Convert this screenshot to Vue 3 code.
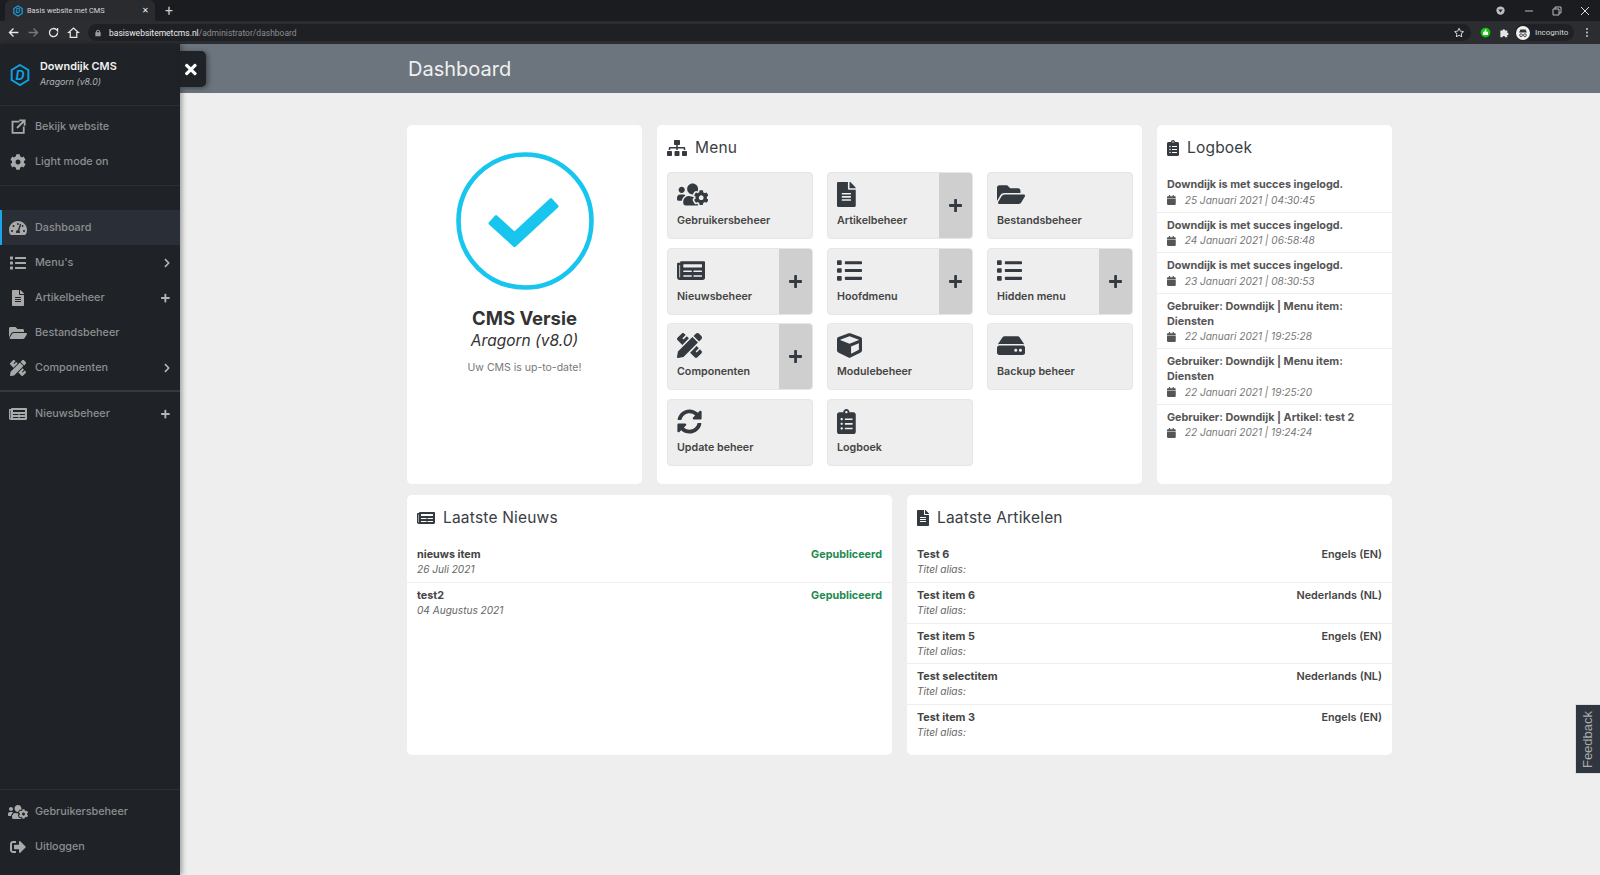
<script setup>
const icons = {
  times: ['0 0 352 512', 'M242.72 256l100.07-100.07c12.28-12.28 12.28-32.19 0-44.48l-22.24-22.24c-12.28-12.28-32.19-12.28-44.48 0L176 189.28 75.93 89.21c-12.28-12.28-32.19-12.28-44.48 0L9.21 111.45c-12.28 12.28-12.28 32.19 0 44.48L109.28 256 9.21 356.07c-12.28 12.28-12.28 32.19 0 44.48l22.24 22.24c12.28 12.28 32.2 12.28 44.48 0L176 322.72l100.07 100.07c12.28 12.28 32.2 12.28 44.48 0l22.24-22.24c12.28-12.28 12.28-32.19 0-44.48L242.72 256z'],
  plus: ['0 0 448 512', 'M416 208H272V64c0-17.67-14.33-32-32-32h-32c-17.67 0-32 14.33-32 32v144H32c-17.67 0-32 14.33-32 32v32c0 17.67 14.33 32 32 32h144v144c0 17.67 14.33 32 32 32h32c17.67 0 32-14.33 32-32V304h144c17.67 0 32-14.33 32-32v-32c0-17.67-14.33-32-32-32z'],
  chevron: ['0 0 320 512', 'M285.476 272.971L91.132 467.314c-9.373 9.373-24.569 9.373-33.941 0l-22.667-22.667c-9.357-9.357-9.375-24.522-.04-33.901L188.505 256 34.484 101.255c-9.335-9.379-9.317-24.544.04-33.901l22.667-22.667c9.373-9.373 24.569-9.373 33.941 0L285.475 239.03c9.373 9.372 9.373 24.568.001 33.941z'],
  list: ['0 0 512 512', 'M80 368H16a16 16 0 0 0-16 16v64a16 16 0 0 0 16 16h64a16 16 0 0 0 16-16v-64a16 16 0 0 0-16-16zm0-320H16A16 16 0 0 0 0 64v64a16 16 0 0 0 16 16h64a16 16 0 0 0 16-16V64a16 16 0 0 0-16-16zm0 160H16a16 16 0 0 0-16 16v64a16 16 0 0 0 16 16h64a16 16 0 0 0 16-16v-64a16 16 0 0 0-16-16zm416 176H176a16 16 0 0 0-16 16v32a16 16 0 0 0 16 16h320a16 16 0 0 0 16-16v-32a16 16 0 0 0-16-16zm0-320H176a16 16 0 0 0-16 16v32a16 16 0 0 0 16 16h320a16 16 0 0 0 16-16V80a16 16 0 0 0-16-16zm0 160H176a16 16 0 0 0-16 16v32a16 16 0 0 0 16 16h320a16 16 0 0 0 16-16v-32a16 16 0 0 0-16-16z'],
  file: ['0 0 384 512', 'M224 136V0H24C10.7 0 0 10.7 0 24v464c0 13.3 10.7 24 24 24h336c13.3 0 24-10.7 24-24V160H248c-13.2 0-24-10.8-24-24zm64 236c0 6.6-5.4 12-12 12H108c-6.6 0-12-5.4-12-12v-8c0-6.6 5.4-12 12-12h168c6.6 0 12 5.4 12 12v8zm0-64c0 6.6-5.4 12-12 12H108c-6.6 0-12-5.4-12-12v-8c0-6.6 5.4-12 12-12h168c6.6 0 12 5.4 12 12v8zm0-72v8c0 6.6-5.4 12-12 12H108c-6.6 0-12-5.4-12-12v-8c0-6.6 5.4-12 12-12h168c6.6 0 12 5.4 12 12zm96-114.1v6.1H256V0h6.1c6.4 0 12.5 2.5 17 7l97.9 98c4.5 4.5 7 10.6 7 16.9z'],
  folder: ['0 0 576 512', 'M572.694 292.093L500.27 416.248A63.997 63.997 0 0 1 444.989 448H45.025c-18.523 0-30.064-20.093-20.731-36.093l72.424-124.155A64 64 0 0 1 152 256h399.964c18.523 0 30.064 20.093 20.73 36.093zM152 224h328v-48c0-26.51-21.49-48-48-48H272l-64-64H48C21.49 64 0 85.49 0 112v278.046l69.077-118.418C86.214 242.25 117.989 224 152 224z'],
  news: ['0 0 576 512', 'M552 64H88c-13.255 0-24 10.745-24 24v8H24c-13.255 0-24 10.745-24 24v272c0 30.928 25.072 56 56 56h472c26.51 0 48-21.49 48-48V88c0-13.255-10.745-24-24-24zM56 400a8 8 0 0 1-8-8V144h16v248a8 8 0 0 1-8 8zm236-16H140c-6.627 0-12-5.373-12-12v-8c0-6.627 5.373-12 12-12h152c6.627 0 12 5.373 12 12v8c0 6.627-5.373 12-12 12zm208 0H348c-6.627 0-12-5.373-12-12v-8c0-6.627 5.373-12 12-12h152c6.627 0 12 5.373 12 12v8c0 6.627-5.373 12-12 12zm-208-96H140c-6.627 0-12-5.373-12-12v-8c0-6.627 5.373-12 12-12h152c6.627 0 12 5.373 12 12v8c0 6.627-5.373 12-12 12zm208 0H348c-6.627 0-12-5.373-12-12v-8c0-6.627 5.373-12 12-12h152c6.627 0 12 5.373 12 12v8c0 6.627-5.373 12-12 12zm0-96H140c-6.627 0-12-5.373-12-12v-40c0-6.627 5.373-12 12-12h360c6.627 0 12 5.373 12 12v40c0 6.627-5.373 12-12 12z'],
  sitemap: ['0 0 640 512', 'M128 352H32c-17.67 0-32 14.33-32 32v96c0 17.67 14.33 32 32 32h96c17.67 0 32-14.33 32-32v-96c0-17.67-14.33-32-32-32zm-24-80h192v48h48v-48h192v48h48v-57.59c0-21.17-17.23-38.41-38.41-38.41H344v-64h40c17.67 0 32-14.33 32-32V32c0-17.67-14.33-32-32-32H256c-17.67 0-32 14.33-32 32v96c0 17.67 14.33 32 32 32h40v64H94.41C73.23 224 56 241.23 56 262.41V320h48v-48zm264 80h-96c-17.67 0-32 14.33-32 32v96c0 17.67 14.33 32 32 32h96c17.67 0 32-14.33 32-32v-96c0-17.67-14.33-32-32-32zm240 0h-96c-17.67 0-32 14.33-32 32v96c0 17.67 14.33 32 32 32h96c17.67 0 32-14.33 32-32v-96c0-17.67-14.33-32-32-32z'],
  cube: ['0 0 512 512', 'M239.1 6.3l-208 78c-18.7 7-31.1 25-31.1 45v225.1c0 18.2 10.3 34.8 26.5 42.9l208 104c13.5 6.8 29.4 6.8 42.9 0l208-104c16.3-8.1 26.5-24.8 26.5-42.9V129.3c0-20-12.4-37.9-31.1-44.9l-208-78C262 2.2 250 2.2 239.1 6.3zM256 68.4l192 72v1.1l-192 78-192-78v-1.1l192-72zm32 356V275.5l160-65v133.9l-160 80z'],
  hdd: ['0 0 576 512', 'M576 304v96c0 26.51-21.49 48-48 48H48c-26.51 0-48-21.49-48-48v-96c0-26.51 21.49-48 48-48h480c26.51 0 48 21.49 48 48zm-48-80a79.557 79.557 0 0 1 30.777 6.165L462.25 85.374A48.003 48.003 0 0 0 422.311 64H153.689a48 48 0 0 0-39.938 21.374L17.223 230.165A79.557 79.557 0 0 1 48 224h480zm-48 96c-17.673 0-32 14.327-32 32s14.327 32 32 32 32-14.327 32-32-14.327-32-32-32zm-96 0c-17.673 0-32 14.327-32 32s14.327 32 32 32 32-14.327 32-32-14.327-32-32-32z'],
  sync: ['0 0 512 512', 'M370.72 133.28C339.458 104.008 298.888 87.962 255.848 88c-77.458.068-144.328 53.178-162.791 126.85-1.344 5.363-6.122 9.15-11.651 9.15H24.103c-7.498 0-13.194-6.807-11.807-14.176C33.933 94.924 134.813 8 256 8c66.448 0 126.791 26.136 171.315 68.685L463.03 40.97C478.149 25.851 504 36.559 504 57.941V192c0 13.255-10.745 24-24 24H345.941c-21.382 0-32.09-25.851-16.971-40.971l41.75-41.749zM32 296h134.059c21.382 0 32.09 25.851 16.971 40.971l-41.75 41.75c31.262 29.273 71.835 45.319 114.876 45.28 77.418-.07 144.315-53.144 162.787-126.849 1.344-5.363 6.122-9.15 11.651-9.15h57.304c7.498 0 13.194 6.807 11.807 14.176C478.067 417.076 377.187 504 256 504c-66.448 0-126.791-26.136-171.315-68.685L48.97 471.03C33.851 486.149 8 475.441 8 454.059V320c0-13.255 10.745-24 24-24z'],
  clipboard: ['0 0 384 512', 'M336 64h-80c0-35.3-28.7-64-64-64s-64 28.7-64 64H48C21.5 64 0 85.5 0 112v352c0 26.5 21.5 48 48 48h288c26.5 0 48-21.5 48-48V112c0-26.5-21.5-48-48-48zM96 424c-13.3 0-24-10.7-24-24s10.7-24 24-24 24 10.7 24 24-10.7 24-24 24zm0-96c-13.3 0-24-10.7-24-24s10.7-24 24-24 24 10.7 24 24-10.7 24-24 24zm0-96c-13.3 0-24-10.7-24-24s10.7-24 24-24 24 10.7 24 24-10.7 24-24 24zm96-192c13.3 0 24 10.7 24 24s-10.7 24-24 24-24-10.7-24-24 10.7-24 24-24zm128 368c0 4.4-3.6 8-8 8H168c-4.4 0-8-3.6-8-8v-16c0-4.4 3.6-8 8-8h144c4.4 0 8 3.6 8 8v16zm0-96c0 4.4-3.6 8-8 8H168c-4.4 0-8-3.6-8-8v-16c0-4.4 3.6-8 8-8h144c4.4 0 8 3.6 8 8v16zm0-96c0 4.4-3.6 8-8 8H168c-4.4 0-8-3.6-8-8v-16c0-4.4 3.6-8 8-8h144c4.4 0 8 3.6 8 8v16z'],
  calendar: ['0 0 448 512', 'M12 192h424c6.6 0 12 5.4 12 12v260c0 26.5-21.5 48-48 48H48c-26.5 0-48-21.5-48-48V204c0-6.6 5.4-12 12-12zm436-44v-36c0-26.5-21.5-48-48-48h-48V12c0-6.6-5.4-12-12-12h-40c-6.6 0-12 5.4-12 12v52H160V12c0-6.6-5.4-12-12-12h-40c-6.6 0-12 5.4-12 12v52H48C21.5 64 0 85.5 0 112v36c0 6.6 5.4 12 12 12h424c6.6 0 12-5.4 12-12z'],
  signout: ['0 0 512 512', 'M497 273L329 441c-15 15-41 4.5-41-17v-96H152c-13.3 0-24-10.7-24-24v-96c0-13.3 10.7-24 24-24h136V88c0-21.4 25.9-32 41-17l168 168c9.3 9.4 9.3 24.6 0 34zM192 436v-40c0-6.6-5.4-12-12-12H96c-17.7 0-32-14.3-32-32V160c0-17.7 14.3-32 32-32h84c6.6 0 12-5.4 12-12V76c0-6.6-5.4-12-12-12H96c-53 0-96 43-96 96v192c0 53 43 96 96 96h84c6.6 0 12-5.4 12-12z'],
  gauge: ['0 0 576 512', 'M288 32C128.94 32 0 160.94 0 320c0 52.8 14.25 102.26 39.06 144.8 5.61 9.62 16.3 15.2 27.44 15.2h443c11.14 0 21.83-5.58 27.44-15.2C561.75 422.26 576 372.8 576 320c0-159.06-128.94-288-288-288zm0 64c14.71 0 26.58 10.13 30.32 23.65-1.11 2.26-2.64 4.23-3.45 6.67l-9.22 27.67c-5.13 3.49-10.97 6.01-17.64 6.01-17.67 0-32-14.33-32-32S270.33 96 288 96zM96 384c-17.67 0-32-14.33-32-32s14.33-32 32-32 32 14.33 32 32-14.33 32-32 32zm48-160c-17.67 0-32-14.33-32-32s14.33-32 32-32 32 14.33 32 32-14.33 32-32 32zm246.77-72.41l-61.33 184C343.13 347.33 352 364.54 352 384c0 11.72-3.38 22.55-8.88 32H232.88c-5.5-9.45-8.88-20.28-8.88-32 0-33.94 26.5-61.43 59.9-63.59l61.34-184.01c4.17-12.56 17.73-19.45 30.36-15.17 12.57 4.19 19.35 17.79 15.17 30.36zm14.66 57.2l15.52-46.55c3.47-1.29 7.13-2.23 11.05-2.23 17.67 0 32 14.33 32 32s-14.33 32-32 32c-11.38-.01-20.89-6.28-26.57-15.22zM480 384c-17.67 0-32-14.33-32-32s14.33-32 32-32 32 14.33 32 32-14.33 32-32 32z'],
  tools: ['0 0 512 512', 'M109.46 244.04l134.58-134.56-44.12-44.12-61.68 61.68a7.919 7.919 0 0 1-11.21 0l-11.21-11.21c-3.1-3.1-3.1-8.12 0-11.21l61.68-61.68-33.64-33.65C131.47-3.1 111.39-3.1 99 9.29L9.29 99c-12.38 12.39-12.39 32.47 0 44.86l100.17 100.18zm388.47-116.8c18.76-18.76 18.75-49.17 0-67.93l-45.25-45.25c-18.76-18.76-49.18-18.76-67.95 0l-46.02 46.01 113.2 113.2 46.02-46.03zM316.08 82.71l-297 296.96L.32 487.11c-2.53 14.49 10.09 27.11 24.59 24.56l107.45-18.84L429.28 195.9 316.08 82.71zm186.63 285.43l-33.64-33.64-61.68 61.68c-3.1 3.1-8.12 3.1-11.21 0l-11.21-11.21c-3.09-3.1-3.09-8.12 0-11.21l61.68-61.68-44.14-44.14L267.93 402.5l100.21 100.2c12.39 12.39 32.47 12.39 44.86 0l89.71-89.7c12.39-12.39 12.39-32.47 0-44.86z'],
  cog: ['0 0 512 512', 'M487.4 315.7l-42.6-24.6c4.3-23.2 4.3-47 0-70.2l42.6-24.6c4.9-2.8 7.1-8.6 5.5-14-11.1-35.6-30-67.8-54.7-94.6-3.8-4.1-10-5.1-14.8-2.3L380.8 110c-17.9-15.4-38.5-27.3-60.8-35.1V25.8c0-5.6-3.9-10.5-9.4-11.7-36.7-8.2-74.3-7.8-109.2 0-5.5 1.2-9.4 6.1-9.4 11.7V75c-22.2 7.9-42.8 19.8-60.8 35.1L88.7 85.5c-4.9-2.8-11-1.9-14.8 2.3-24.7 26.7-43.6 58.9-54.7 94.6-1.7 5.4.6 11.2 5.5 14L67.3 221c-4.3 23.2-4.3 47 0 70.2l-42.6 24.6c-4.9 2.8-7.1 8.6-5.5 14 11.1 35.6 30 67.8 54.7 94.6 3.8 4.1 10 5.1 14.8 2.3l42.6-24.6c17.9 15.4 38.5 27.3 60.8 35.1v49.2c0 5.6 3.9 10.5 9.4 11.7 36.7 8.2 74.3 7.8 109.2 0 5.5-1.2 9.4-6.1 9.4-11.7v-49.2c22.2-7.9 42.8-19.8 60.8-35.1l42.6 24.6c4.9 2.8 11 1.9 14.8-2.3 24.7-26.7 43.6-58.9 54.7-94.6 1.5-5.5-.7-11.3-5.6-14.1zM256 336c-44.1 0-80-35.9-80-80s35.9-80 80-80 80 35.9 80 80-35.9 80-80 80z'],
  userscog: ['0 0 640 512', 'M610.5 341.3c2.6-14.1 2.6-28.5 0-42.6l25.8-14.9c3-1.7 4.3-5.2 3.3-8.5-6.7-21.6-18.2-41.2-33.2-57.4-2.3-2.5-6-3.1-9-1.4l-25.8 14.9c-10.9-9.3-23.4-16.5-36.9-21.3v-29.8c0-3.4-2.4-6.4-5.7-7.1-22.3-5-45-4.8-66.2 0-3.3.7-5.7 3.7-5.7 7.1v29.8c-13.5 4.8-26 12-36.9 21.3l-25.8-14.9c-2.9-1.7-6.7-1.1-9 1.4-15 16.2-26.5 35.8-33.2 57.4-1 3.3.4 6.8 3.3 8.5l25.8 14.9c-2.6 14.1-2.6 28.5 0 42.6l-25.8 14.9c-3 1.7-4.3 5.2-3.3 8.5 6.7 21.6 18.2 41.1 33.2 57.4 2.3 2.5 6 3.1 9 1.4l25.8-14.9c10.9 9.3 23.4 16.5 36.9 21.3v29.8c0 3.4 2.4 6.4 5.7 7.1 22.3 5 45 4.8 66.2 0 3.3-.7 5.7-3.7 5.7-7.1v-29.8c13.5-4.8 26-12 36.9-21.3l25.8 14.9c2.9 1.7 6.7 1.1 9-1.4 15-16.2 26.5-35.8 33.2-57.4 1-3.3-.4-6.8-3.3-8.5l-25.8-14.9zM496 368.5c-26.8 0-48.5-21.8-48.5-48.5s21.8-48.5 48.5-48.5 48.5 21.8 48.5 48.5-21.7 48.5-48.5 48.5zM96 224c35.3 0 64-28.7 64-64s-28.7-64-64-64-64 28.7-64 64 28.7 64 64 64zm224 32c1.9 0 3.7-.5 5.6-.6 8.3-21.7 20.5-42.1 36.3-59.2 7.4-8 17.9-12.6 28.9-12.6 6.9 0 13.7 1.8 19.6 5.3l7.9 4.6c.8-.5 1.6-.9 2.4-1.4 7-14.6 11.2-30.8 11.2-48 0-61.9-50.1-112-112-112S208 82.1 208 144c0 61.9 50.1 112 112 112zm105.2 194.5c-2.3-1.2-4.6-2.6-6.8-3.9-8.2 4.8-15.3 9.8-27.5 9.8-10.9 0-21.4-4.6-28.9-12.6-18.3-19.8-32.3-43.9-40.2-69.6-10.7-34.5 24.9-49.7 25.8-50.3-.1-2.6-.1-5.2 0-7.8l-7.9-4.6c-3.8-2.2-7-5-9.8-8.1-3.3.2-6.5.6-9.8.6-24.6 0-47.6-6-68.5-16h-8.3C179.6 288 128 339.6 128 403.2V432c0 26.5 21.5 48 48 48h255.4c-3.7-6-6.2-12.8-6.2-20.3v-9.2zM173.1 274.6C161.5 263.1 145.6 256 128 256H64c-35.3 0-64 28.7-64 64v32c0 17.7 14.3 32 32 32h65.9c6.3-47.4 34.9-87.3 75.2-109.4z'],
  star: ['0 0 576 512', 'M528.1 171.5L382 150.2 316.7 17.8c-11.7-23.6-45.6-23.9-57.4 0L194 150.2 47.9 171.5c-26.2 3.8-36.7 36.1-17.7 54.6l105.7 103-25 145.5c-4.5 26.3 23.2 46 46.4 33.7L288 439.6l130.7 68.7c23.2 12.2 50.9-7.4 46.4-33.7l-25-145.5 105.7-103c19-18.5 8.5-50.8-17.7-54.6zM388.6 312.3l23.7 138.4L288 385.4l-124.3 65.3 23.7-138.4-100.6-98 139-20.2 62.2-126 62.2 126 139 20.2-100.6 98z'],
}

const topLinks = [
  { icon: 'cog', label: 'Light mode on' },
]
const navItems = [
  { icon: 'gauge', label: 'Dashboard', active: true },
  { icon: 'list', label: "Menu's", after: 'chevron' },
  { icon: 'file', label: 'Artikelbeheer', after: 'plus' },
  { icon: 'folder', label: 'Bestandsbeheer' },
  { icon: 'tools', label: 'Componenten', after: 'chevron' },
]
const tiles = [
  { icon: 'userscog', label: 'Gebruikersbeheer' },
  { icon: 'file', label: 'Artikelbeheer', add: true },
  { icon: 'folder', label: 'Bestandsbeheer' },
  { icon: 'news', label: 'Nieuwsbeheer', add: true },
  { icon: 'list', label: 'Hoofdmenu', add: true },
  { icon: 'list', label: 'Hidden menu', add: true },
  { icon: 'tools', label: 'Componenten', add: true },
  { icon: 'cube', label: 'Modulebeheer' },
  { icon: 'hdd', label: 'Backup beheer' },
  { icon: 'sync', label: 'Update beheer' },
  { icon: 'clipboard', label: 'Logboek' },
]
const logs = [
  { text: 'Downdijk is met succes ingelogd.', date: '25 Januari 2021 | 04:30:45' },
  { text: 'Downdijk is met succes ingelogd.', date: '24 Januari 2021 | 06:58:48' },
  { text: 'Downdijk is met succes ingelogd.', date: '23 Januari 2021 | 08:30:53' },
  { text: 'Gebruiker: Downdijk | Menu item: Diensten', date: '22 Januari 2021 | 19:25:28' },
  { text: 'Gebruiker: Downdijk | Menu item: Diensten', date: '22 Januari 2021 | 19:25:20' },
  { text: 'Gebruiker: Downdijk | Artikel: test 2', date: '22 Januari 2021 | 19:24:24' },
]
const news = [
  { title: 'nieuws item', sub: '26 Juli 2021', side: 'Gepubliceerd' },
  { title: 'test2', sub: '04 Augustus 2021', side: 'Gepubliceerd' },
]
const articles = [
  { title: 'Test 6', sub: 'Titel alias:', side: 'Engels (EN)' },
  { title: 'Test item 6', sub: 'Titel alias:', side: 'Nederlands (NL)' },
  { title: 'Test item 5', sub: 'Titel alias:', side: 'Engels (EN)' },
  { title: 'Test selectitem', sub: 'Titel alias:', side: 'Nederlands (NL)' },
  { title: 'Test item 3', sub: 'Titel alias:', side: 'Engels (EN)' },
]
</script>

<template>
  <div class="window">
    <div class="tabstrip">
      <div class="tab">
        <svg class="favicon" viewBox="0 0 24 28">
          <path d="M12 2l10 6v12l-10 6-10-6V8z" fill="none" stroke="#1a9fd8" stroke-width="3" />
          <text x="12" y="20" text-anchor="middle" class="favicon-d">D</text>
        </svg>
        <span class="tab-title">Basis website met CMS</span>
        <span class="tab-close">✕</span>
      </div>
      <span class="tab-new">+</span>
      <div class="win-controls">
        <svg class="win-badge" viewBox="0 0 16 16"><circle cx="8" cy="8" r="6" fill="#bdbdbd" /><path d="M5 6.5h6L8 11z" fill="#222" /></svg>
        <svg class="win-btn" viewBox="0 0 12 12"><path d="M2 6h8" stroke="#bbb" /></svg>
        <svg class="win-btn" viewBox="0 0 12 12"><path d="M2 4h6v6H2zM4 4V2h6v6H8" fill="none" stroke="#bbb" /></svg>
        <svg class="win-btn" viewBox="0 0 12 12"><path d="M2 2l8 8M10 2l-8 8" stroke="#ddd" /></svg>
      </div>
    </div>
    <div class="toolbar">
      <svg class="nav-ico" viewBox="0 0 16 16"><path d="M14 8H3M8 3L3 8l5 5" fill="none" stroke="#e8e8e8" stroke-width="1.6" /></svg>
      <svg class="nav-ico" viewBox="0 0 16 16"><path d="M2 8h11M8 3l5 5-5 5" fill="none" stroke="#77797c" stroke-width="1.6" /></svg>
      <svg class="nav-ico" viewBox="0 0 16 16"><path d="M13 8a5 5 0 1 1-1.5-3.5L13 6V2.5" fill="none" stroke="#e8e8e8" stroke-width="1.6" /></svg>
      <svg class="nav-ico" viewBox="0 0 16 16"><path d="M2 8l6-5.5L14 8h-2v6H4V8z" fill="none" stroke="#e8e8e8" stroke-width="1.5" /></svg>
      <div class="omnibox">
        <svg class="lock" viewBox="0 0 12 12"><path d="M3 5V4a3 3 0 0 1 6 0v1h1v6H2V5zm1.5 0h3V4a1.5 1.5 0 0 0-3 0z" fill="#9a9b9d" /></svg>
        <span class="url"><b>basiswebsitemetcms.nl</b>/administrator/dashboard</span>
        <svg class="fa omni-star" :viewBox="icons.star[0]"><path :d="icons.star[1]" /></svg>
      </div>
      <svg class="ext-green" viewBox="0 0 16 16"><circle cx="8" cy="8" r="6" fill="#11c20f" /><path d="M5 7h1.5l1.5-3h1v3h2v4H5z" fill="#fff" /></svg>
      <svg class="ext-puzzle" viewBox="0 0 16 16"><path d="M2 5h3.2a1.8 1.8 0 1 1 3.6 0H12v3.2a1.8 1.8 0 1 1 0 3.6V15H8.8a1.8 1.8 0 1 0-3.6 0H2z" fill="#e4e4e4" /></svg>
      <div class="incognito">
        <svg class="avatar" viewBox="0 0 16 16"><circle cx="8" cy="8" r="8" fill="#efefef" /><path d="M3.5 7.5h9L11 4H5z" fill="#333" /><circle cx="5.8" cy="10.5" r="1.6" fill="none" stroke="#333" /><circle cx="10.2" cy="10.5" r="1.6" fill="none" stroke="#333" /></svg>
        <span>Incognito</span>
      </div>
      <svg class="kebab" viewBox="0 0 4 16"><circle cx="2" cy="3" r="1.4" /><circle cx="2" cy="8" r="1.4" /><circle cx="2" cy="13" r="1.4" /></svg>
    </div>

    <div class="page">
      <aside class="sidebar">
        <div class="brand">
          <svg class="logo" viewBox="0 0 24 28">
            <path d="M12 2l10 6v12l-10 6-10-6V8z" fill="none" stroke="#0f9fe0" stroke-width="2.4" />
            <text x="12" y="19.5" text-anchor="middle" class="logo-d">D</text>
          </svg>
          <div class="brand-text">
            <div class="brand-name">Downdijk CMS</div>
            <div class="brand-sub">Aragorn (v8.0)</div>
          </div>
        </div>
        <button class="close-btn" type="button">
          <svg class="fa" :viewBox="icons.times[0]"><path :d="icons.times[1]" /></svg>
        </button>

        <div class="nav-group first">
          <a class="nav-item">
            <span class="nav-icon">
              <svg viewBox="0 0 20 20"><path d="M11 3.5H2v15h15V10M8 12L18 2M11 1.8h7.2V9" fill="none" stroke="currentColor" stroke-width="2.4" /></svg>
            </span>
            <span>Bekijk website</span>
          </a>
          <a v-for="l in topLinks" :key="l.label" class="nav-item">
            <span class="nav-icon"><svg class="fa" :viewBox="icons[l.icon][0]"><path :d="icons[l.icon][1]" /></svg></span>
            <span>{{ l.label }}</span>
          </a>
        </div>

        <div class="nav-group main-nav">
          <a v-for="n in navItems" :key="n.label" class="nav-item" :class="{ active: n.active }">
            <span class="nav-icon"><svg class="fa" :viewBox="icons[n.icon][0]"><path :d="icons[n.icon][1]" /></svg></span>
            <span>{{ n.label }}</span>
            <svg v-if="n.after" class="fa after" :viewBox="icons[n.after][0]"><path :d="icons[n.after][1]" /></svg>
          </a>
        </div>

        <div class="nav-group news-nav">
          <a class="nav-item">
            <span class="nav-icon"><svg class="fa" :viewBox="icons.news[0]"><path :d="icons.news[1]" /></svg></span>
            <span>Nieuwsbeheer</span>
            <svg class="fa after" :viewBox="icons.plus[0]"><path :d="icons.plus[1]" /></svg>
          </a>
        </div>

        <div class="nav-group bottom-nav">
          <a class="nav-item">
            <span class="nav-icon"><svg class="fa" :viewBox="icons.userscog[0]"><path :d="icons.userscog[1]" /></svg></span>
            <span>Gebruikersbeheer</span>
          </a>
          <a class="nav-item">
            <span class="nav-icon"><svg class="fa" :viewBox="icons.signout[0]"><path :d="icons.signout[1]" /></svg></span>
            <span>Uitloggen</span>
          </a>
        </div>
      </aside>

      <main class="main">
        <header class="topbar"><h1>Dashboard</h1></header>
        <div class="content">
          <section class="card version">
            <svg class="status" viewBox="0 0 140 140">
              <circle cx="70" cy="70" r="66.5" fill="none" stroke="#17c5ee" stroke-width="4.6" />
              <path d="M41 65.7L59.5 82.3 96 48.7 102 55.3 59.5 94.7 35 72.3z" fill="#17c5ee" stroke="#17c5ee" stroke-width="3" stroke-linejoin="round" />
            </svg>
            <h2>CMS Versie</h2>
            <div class="version-name">Aragorn (v8.0)</div>
            <p>Uw CMS is up-to-date!</p>
          </section>

          <section class="card">
            <h3 class="card-title">
              <svg class="fa" :viewBox="icons.sitemap[0]"><path :d="icons.sitemap[1]" /></svg>Menu
            </h3>
            <div class="tiles">
              <div v-for="t in tiles" :key="t.label" class="tile">
                <div class="tile-main">
                  <svg class="fa" :viewBox="icons[t.icon][0]"><path :d="icons[t.icon][1]" /></svg>
                  <span>{{ t.label }}</span>
                </div>
                <div v-if="t.add" class="tile-add">
                  <svg class="fa" :viewBox="icons.plus[0]"><path :d="icons.plus[1]" /></svg>
                </div>
              </div>
            </div>
          </section>

          <section class="card">
            <h3 class="card-title">
              <svg class="fa" :viewBox="icons.clipboard[0]"><path :d="icons.clipboard[1]" /></svg>Logboek
            </h3>
            <ul class="log">
              <li v-for="(l, i) in logs" :key="i">
                <strong>{{ l.text }}</strong>
                <em>
                  <svg class="fa" :viewBox="icons.calendar[0]"><path :d="icons.calendar[1]" /></svg>{{ l.date }}
                </em>
              </li>
            </ul>
          </section>

          <div class="bottom-row">
            <section class="card">
              <h3 class="card-title">
                <svg class="fa" :viewBox="icons.news[0]"><path :d="icons.news[1]" /></svg>Laatste Nieuws
              </h3>
              <ul class="rows">
                <li v-for="r in news" :key="r.title">
                  <div><strong>{{ r.title }}</strong><em>{{ r.sub }}</em></div>
                  <span class="published">{{ r.side }}</span>
                </li>
              </ul>
            </section>
            <section class="card">
              <h3 class="card-title">
                <svg class="fa" :viewBox="icons.file[0]"><path :d="icons.file[1]" /></svg>Laatste Artikelen
              </h3>
              <ul class="rows">
                <li v-for="r in articles" :key="r.title">
                  <div><strong>{{ r.title }}</strong><em>{{ r.sub }}</em></div>
                  <span class="lang">{{ r.side }}</span>
                </li>
              </ul>
            </section>
          </div>
        </div>
      </main>
    </div>
    <div class="feedback"><span>Feedback</span></div>
  </div>
</template>

<style scoped>
.window {
  position: relative;
  display: flex;
  flex-direction: column;
  height: 875px;
  overflow: hidden;
  font-family: Inter, "Liberation Sans", sans-serif;
  background: #eee;
}

.fa {
  fill: currentColor;
  display: block;
  height: 1em;
  flex: none;
}

.tabstrip {
  display: flex;
  align-items: flex-end;
  height: 21px;
  padding-left: 5px;
  background: #1b1c1f;
}

.tab {
  display: flex;
  align-items: center;
  width: 150px;
  height: 21px;
  padding: 0 6px 0 8px;
  box-sizing: border-box;
  background: #2a2b2f;
  border-radius: 6px 6px 0 0;
  color: #d8d8d8;
  font-family: Roboto, sans-serif;
  font-size: 7.4px;
}

.favicon {
  width: 10px;
  height: 12px;
  margin-right: 4px;
}

.favicon-d {
  fill: #1a9fd8;
  font: italic 700 15px Inter, sans-serif;
}

.tab-close {
  margin-left: auto;
  font-size: 8px;
  color: #eee;
}

.tab-new {
  align-self: center;
  margin-left: 10px;
  color: #ccc;
  font: 14px Roboto, sans-serif;
}

.win-controls {
  display: flex;
  align-items: center;
  align-self: center;
  margin-left: auto;
  padding-right: 9px;
}

.win-badge {
  width: 11px;
  height: 11px;
  margin-right: 1px;
}

.win-btn {
  width: 12px;
  height: 12px;
  margin-left: 16px;
}

.toolbar {
  display: flex;
  align-items: center;
  height: 23px;
  padding-left: 7px;
  background: #2c2d30;
}

.nav-ico {
  width: 13px;
  height: 13px;
  margin-right: 7px;
}

.omnibox {
  display: flex;
  align-items: center;
  width: 1383px;
  height: 17px;
  margin-left: 1px;
  padding: 0 7px 0 6px;
  box-sizing: border-box;
  background: #1f2023;
  border-radius: 9px;
}

.lock {
  width: 8px;
  height: 8px;
  margin-right: 7px;
}

.url {
  color: #8b8c8e;
  font-family: Roboto, sans-serif;
  font-size: 8.5px;
}

.url b {
  color: #eceff1;
  font-weight: 400;
}

.omni-star {
  margin-left: auto;
  font-size: 9px;
  color: #ddd;
}

.ext-green {
  width: 13px;
  height: 13px;
  margin-left: 8px;
}

.ext-puzzle {
  width: 11px;
  height: 11px;
  margin-left: 7px;
}

.incognito {
  display: flex;
  align-items: center;
  gap: 5px;
  height: 17px;
  margin-left: 5px;
  padding: 0 6px 0 1px;
  background: #202124;
  border-radius: 9px;
  color: #d5d5d5;
  font-family: Roboto, sans-serif;
  font-size: 8px;
}

.avatar {
  width: 14px;
  height: 14px;
}

.kebab {
  width: 4px;
  height: 11px;
  margin-left: 11px;
  fill: #ccc;
}

.page {
  display: flex;
  flex: 1;
  min-height: 0;
}

.sidebar {
  position: relative;
  display: flex;
  flex-direction: column;
  flex: none;
  width: 180px;
  background: #1f2327;
  box-shadow: 2px 0 5px rgba(0, 0, 0, 0.35);
  z-index: 2;
}

.brand {
  display: flex;
  align-items: center;
  gap: 10px;
  height: 61px;
  padding-left: 10px;
  border-bottom: 1px solid #2b2f33;
}

.logo {
  width: 20px;
  height: 24px;
  flex: none;
}

.logo-d {
  fill: #0f9fe0;
  font: italic 700 15px Inter, sans-serif;
}

.brand-text {
  margin-bottom: 4px;
}

.brand-name {
  color: #f1f1f1;
  font-size: 10.9px;
  font-weight: 600;
}

.brand-sub {
  margin-top: 3px;
  color: #b5b5b5;
  font-size: 8.8px;
  font-style: italic;
}

.close-btn {
  position: absolute;
  top: 7px;
  right: -26px;
  display: grid;
  place-items: center;
  width: 26px;
  height: 36px;
  padding: 0 4px 0 0;
  border: 0;
  border-radius: 0 5px 5px 0;
  background: #1f2327;
  color: #fff;
  font-size: 17px;
  box-shadow: 2px 1px 5px rgba(0, 0, 0, 0.4);
}

.nav-group {
  display: flex;
  flex-direction: column;
}

.nav-group.first {
  padding: 3px 0 6px;
  border-bottom: 1px solid #2b2f33;
}

.main-nav {
  margin-top: 24px;
  padding-bottom: 5px;
  border-bottom: 2px solid #363a3e;
}

.news-nav {
  margin-top: 4px;
}

.bottom-nav {
  margin-top: auto;
  padding: 4px 0 11px;
  border-top: 1px solid #2b2f33;
}

.nav-item {
  display: flex;
  align-items: center;
  height: 35px;
  padding: 0 10px 0 9px;
  color: #8d8f91;
  font-size: 10.8px;
  font-weight: 500;
}

.nav-item.active {
  height: 35px;
  padding-left: 7px;
  border-left: 2px solid #18a5ea;
  background: #2a2e36;
}

.nav-icon {
  display: flex;
  justify-content: center;
  width: 18px;
  margin-right: 8px;
  color: #a9a9a9;
}

.nav-icon svg {
  width: auto;
  height: 16px;
  flex: none;
}

.nav-icon svg:not(.fa) {
  width: 15px;
  height: 15px;
}

.after {
  margin-left: auto;
  color: #b5b5b5;
  font-size: 10px;
}

.main {
  flex: 1;
  min-width: 0;
}

.topbar {
  display: flex;
  align-items: center;
  height: 49px;
  padding-left: 228px;
  background: #6c757d;
}

.topbar h1 {
  margin: 0;
  color: #f0f0f0;
  font-size: 20px;
  font-weight: 400;
}

.content {
  display: grid;
  grid-template-columns: 235px 485px 235px;
  grid-template-rows: 359px 260px;
  column-gap: 15px;
  row-gap: 11px;
  width: 985px;
  margin: 32px 0 0 227px;
}

.card {
  background: #fff;
  border-radius: 5px;
  color: #333;
}

.version {
  display: flex;
  flex-direction: column;
  align-items: center;
  padding-top: 26px;
  box-sizing: border-box;
}

.status {
  width: 140px;
  height: 140px;
}

.version h2 {
  margin: 15px 0 0;
  font-size: 18.5px;
  line-height: 24px;
  font-weight: 700;
  color: #333;
}

.version-name {
  font-size: 15.5px;
  line-height: 21px;
  font-style: italic;
  color: #333;
}

.version p {
  margin: 10px 0 0;
  font-size: 10.5px;
  color: #777;
}

.card-title {
  display: flex;
  align-items: center;
  gap: 8px;
  height: 47px;
  margin: 0;
  padding: 0 10px 2px;
  box-sizing: border-box;
  font-size: 15.5px;
  font-weight: 400;
  letter-spacing: 0.2px;
  color: #3a3d42;
}

.card-title .fa {
  height: 16px;
  color: #343a40;
}

.tiles {
  display: grid;
  grid-template-columns: repeat(3, 146px);
  grid-auto-rows: 67px;
  column-gap: 14px;
  row-gap: 8.7px;
  padding: 0 10px;
}

.tile {
  display: flex;
  background: #eee;
  border: 1px solid #e6e6e6;
  border-radius: 4px;
  overflow: hidden;
  box-sizing: border-box;
}

.tile-main {
  display: flex;
  flex: 1;
  flex-direction: column;
  justify-content: space-between;
  padding: 9px 9px 11px;
  color: #343a40;
}

.tile-main .fa {
  height: 25px;
  align-self: flex-start;
}

.tile-main span {
  color: #444;
  font-size: 10.7px;
  font-weight: 600;
}

.tile-add {
  display: grid;
  place-items: center;
  width: 33px;
  background: #cfcfcf;
  color: #343a40;
  font-size: 15px;
}

.log,
.rows {
  margin: 0;
  padding: 0;
  list-style: none;
}

.log li {
  padding: 6px 10px 4px;
  border-bottom: 1px solid #eee;
  font-size: 10.8px;
  line-height: 14.8px;
}

.log li:last-child,
.rows li:last-child {
  border-bottom: 0;
}

.log strong,
.rows strong {
  display: block;
  font-weight: 700;
  color: #555;
}

.log em {
  display: flex;
  align-items: center;
  color: #777;
  font-size: 10.1px;
}

.log em .fa {
  height: 10px;
  margin-right: 9px;
  color: #555;
}

.bottom-row {
  grid-column: 1 / -1;
  display: grid;
  grid-template-columns: 1fr 1fr;
  gap: 15px;
}

.rows li {
  display: flex;
  justify-content: space-between;
  padding: 6px 10px 4px;
  border-bottom: 1px solid #eee;
  font-size: 10.8px;
  line-height: 14.9px;
}

.rows strong {
  color: #444;
  margin-bottom: -1px;
}

.rows em {
  display: block;
  padding-bottom: 1px;
  color: #666;
  font-size: 10.1px;
}

.published {
  color: #1e8a4f;
  font-weight: 700;
}

.lang {
  color: #444;
  font-weight: 600;
}

.feedback {
  position: absolute;
  right: 0;
  top: 704px;
  display: flex;
  align-items: center;
  justify-content: center;
  width: 25px;
  height: 70px;
  background: #2f3640;
  border: 1px solid #ddd;
  border-right: 0;
  box-sizing: border-box;
  color: #aaa;
  font: 13px "Liberation Sans", sans-serif;
}

.feedback span {
  transform: rotate(-90deg);
}
</style>

<style>
html,
body {
  margin: 0;
  background: #eee;
  overflow: hidden;
}
</style>
